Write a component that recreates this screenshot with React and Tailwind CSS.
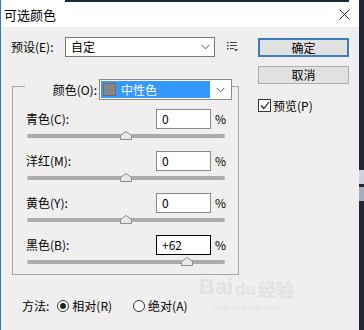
import React from "react";

const rows = [
  { label: "青色(C):", value: "0", pos: 99, focus: false },
  { label: "洋红(M):", value: "0", pos: 99, focus: false },
  { label: "黄色(Y):", value: "0", pos: 99, focus: false },
  { label: "黑色(B):", value: "+62", pos: 160, focus: true },
];

function Chevron() {
  return (
    <svg width="9" height="6" viewBox="0 0 9 6" className="text-[#555]">
      <path d="M0.5 0.8 L4.5 4.8 L8.5 0.8" fill="none" stroke="currentColor" strokeWidth="1" />
    </svg>
  );
}

function Thumb() {
  return (
    <svg width="12" height="9" viewBox="0 0 12 9">
      <path d="M0.5 8.5 L0.5 4.5 L6 0.5 L11.5 4.5 L11.5 8.5 Z" fill="#e8e8e8" stroke="#8c8c8c" strokeWidth="1" />
    </svg>
  );
}

function SliderRow({ row }) {
  return (
    <div className="flex flex-col">
      <div className="flex items-center h-[20px]">
        <span className="flex-1 leading-none">{row.label}</span>
        <div
          className={
            "w-[55px] h-[20px] bg-white flex items-center pl-[5px] leading-none " +
            (row.focus ? "border border-black" : "border border-[#8a8a8a]")
          }
        >
          {row.value}
        </div>
        <span className="ml-[4px] w-[12px] leading-none">%</span>
      </div>
      <div className="relative mt-[2px] ml-[1px] w-[198px] h-[10px] flex items-center">
        <div className="w-full h-[4px] rounded-full bg-[#ababab]" />
        <div className="absolute top-[0px]" style={{ left: row.pos - 6 }}>
          <Thumb />
        </div>
      </div>
    </div>
  );
}

export default function App() {
  return (
    <div className="flex w-[364px] h-[330px] overflow-hidden bg-[#1c2738] text-[12px] text-black font-['Noto_Sans_CJK_SC',sans-serif]">
      <div className="relative flex flex-col w-[359px] h-full border-l border-[#2b7bc0] bg-[#f0eeee]">
        {/* title bar */}
        <div className="flex h-[2px]">
          <div className="w-[64px] bg-white" />
          <div className="w-[284px] bg-[#1d2a3a]" />
          <div className="flex-1 bg-white" />
        </div>
        <div className="h-[25px] bg-white flex items-center justify-between pl-[3px] pr-[9px]">
          <span className="text-[13px] leading-none">可选颜色</span>
          <svg width="11" height="11" viewBox="0 0 11 11">
            <path d="M0.5 0.5 L10.5 10.5 M10.5 0.5 L0.5 10.5" stroke="#222" strokeWidth="1" />
          </svg>
        </div>

        {/* body */}
        <div className="flex pl-[10px]">
          <div className="flex flex-col w-[229px]">
            <div className="mt-[10px] h-[20px] flex items-center">
              <span className="w-[54px] leading-none">预设(E):</span>
              <div className="w-[150px] h-[20px] border border-[#7a7a7a] bg-white flex items-center justify-between pl-[5px] pr-[4px]">
                <span className="leading-none">自定</span>
                <Chevron />
              </div>
              <svg className="ml-[12px]" width="11" height="10" viewBox="0 0 11 10">
                <rect x="0" y="0" width="1.5" height="1.5" fill="#444" />
                <rect x="3" y="0" width="7" height="1" fill="#444" />
                <rect x="0" y="3" width="1.5" height="1.5" fill="#444" />
                <rect x="3" y="3" width="7" height="1" fill="#444" />
                <rect x="0" y="6" width="1.5" height="1.5" fill="#444" />
                <rect x="3" y="6" width="4" height="1" fill="#444" />
                <path d="M7 7 L11 7 L9 9.5 Z" fill="#444" />
              </svg>
            </div>

            {/* group box */}
            <div className="mt-[22px] ml-[1px] w-[227px] flex flex-col">
              <div className="flex h-[21px]">
                <div className="w-[13px] h-[14px] mt-[7px] border-t border-l border-[#a9a5a5]" />
                <span className="w-[74px] text-right pr-[2px] self-center leading-none">颜色(O):</span>
                <div className="w-[133px] h-[21px] border border-[#8a8a8a] bg-white flex items-center p-[1px]">
                  <div className="w-[109px] h-full bg-[#3399ff] flex items-center pl-[2px]">
                    <div className="w-[13px] h-[13px] bg-[#8b8686] border border-[#6f6b6b]" />
                    <span className="ml-[5px] text-white leading-none">中性色</span>
                  </div>
                  <div className="flex-1 flex justify-center">
                    <Chevron />
                  </div>
                </div>
                <div className="flex-1 h-[14px] mt-[7px] border-t border-r border-[#a9a5a5]" />
              </div>
              <div className="flex flex-col gap-[10px] border-l border-r border-b border-[#a9a5a5] pl-[13px] pr-[11px] pt-[9px] pb-[7px]">
                {rows.map((row) => (
                  <SliderRow key={row.label} row={row} />
                ))}
              </div>
            </div>

            <div className="mt-[24px] ml-[11px] h-[14px] flex items-center">
              <span className="leading-none">方法:</span>
              <div className="ml-[8px] w-[12px] h-[12px] rounded-full border border-[#333] bg-white flex items-center justify-center">
                <div className="w-[6px] h-[6px] rounded-full bg-[#222]" />
              </div>
              <span className="ml-[3px] leading-none">相对(R)</span>
              <div className="ml-[21px] w-[12px] h-[12px] rounded-full border border-[#333] bg-white" />
              <span className="ml-[3px] leading-none">绝对(A)</span>
            </div>
          </div>

          {/* right column */}
          <div className="ml-[18px] w-[91px] flex flex-col">
            <div className="mt-[11px] h-[19px] border-2 border-[#3b7cc0] bg-[#e1e1e1] flex items-center justify-center leading-none">
              确定
            </div>
            <div className="mt-[9px] h-[18px] border border-[#adadad] bg-[#e1e1e1] flex items-center justify-center leading-none">
              取消
            </div>
            <div className="mt-[15px] flex items-center">
              <div className="w-[13px] h-[13px] border border-[#333] bg-white flex items-center justify-center">
                <svg width="10" height="9" viewBox="0 0 10 9">
                  <path d="M1 4.5 L3.8 7.5 L9 1" fill="none" stroke="#222" strokeWidth="1.2" />
                </svg>
              </div>
              <span className="ml-[2px] leading-none">预览(P)</span>
            </div>
          </div>
        </div>

        {/* watermark */}
        <div className="absolute left-[198px] top-[276px] flex flex-col items-center text-[#e3e1e1] pointer-events-none">
          <div className="flex items-end">
            <span className="text-[22px] font-bold leading-none font-['Liberation_Sans',sans-serif]">Bai</span>
            <span className="text-[17px] font-bold leading-none ml-[2px] font-['Liberation_Sans',sans-serif]">du</span>
            <span className="text-[18px] font-bold leading-none ml-[2px]">经验</span>
          </div>
          <span className="text-[9px] leading-none mt-[5px] font-['Liberation_Serif',serif]">jingyan.baidu.com</span>
        </div>
      </div>
      <div className="flex-1 flex flex-col">
        <div className="h-[170px]" />
        <div className="h-[14px] bg-[#c9d3df]" />
        <div className="h-[3px]" />
        <div className="h-[14px] bg-[#9fb0c4]" />
      </div>
    </div>
  );
}
